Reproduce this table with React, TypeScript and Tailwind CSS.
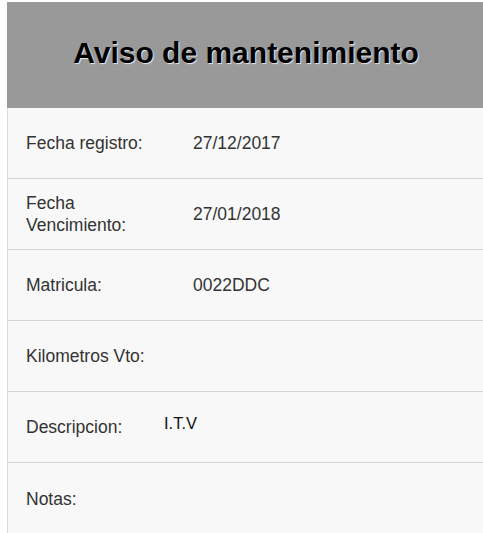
const rows: { label: React.ReactNode; value?: string; small?: boolean }[] = [
  { label: 'Fecha registro:', value: '27/12/2017' },
  { label: <>Fecha<br />Vencimiento:</>, value: '27/01/2018' },
  { label: 'Matricula:', value: '0022DDC' },
  { label: 'Kilometros Vto:' },
  { label: 'Descripcion:', value: 'I.T.V', small: true },
  { label: 'Notas:' },
];

export default function App() {
  return (
    <div className="w-[483px] h-[533px] overflow-hidden bg-white pt-[2px] pl-[7px] font-['Liberation_Sans',Arial,sans-serif]">
      <div className="h-[106px] bg-[#999999] flex items-center justify-center pb-[5px]">
        <h1 className="text-[30px] font-bold text-black pl-[2px] [text-shadow:1px_1px_1px_#e8e8e8]">
          Aviso de mantenimiento
        </h1>
      </div>
      <div className="border-l border-[#dcdcdc] bg-[#f8f8f8]">
        {rows.map((r, i) => (
          <div key={i} className="h-[71px] flex items-center border-b border-[#d4d4d4] last:border-b-0">
            <div className="w-[185px] pl-[18px] text-[17.5px] leading-[22px] text-[#333]">{r.label}</div>
            {r.value && !r.small && <div className="text-[17.5px] text-[#333]">{r.value}</div>}
            {r.small && <div className="-ml-[29px] -mt-[8px] text-[16.5px] text-[#111]">{r.value}</div>}
          </div>
        ))}
      </div>
    </div>
  );
}
